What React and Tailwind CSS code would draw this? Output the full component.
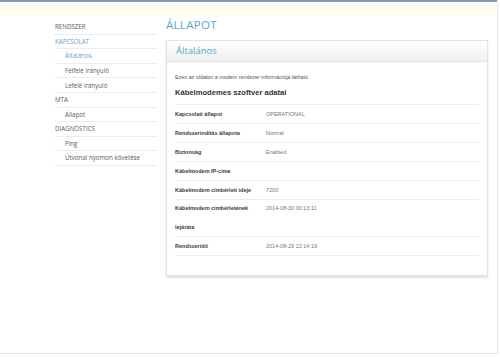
import React from "react";

const nav = [
  { t: "RENDSZER", lvl: 0 },
  { t: "KAPCSOLAT", lvl: 0, active: true },
  { t: "Általános", lvl: 1, active: true },
  { t: "Felfelé irányuló", lvl: 1 },
  { t: "Lefelé irányuló", lvl: 1 },
  { t: "MTA", lvl: 0 },
  { t: "Állapot", lvl: 1 },
  { t: "DIAGNOSTICS", lvl: 0 },
  { t: "Ping", lvl: 1 },
  { t: "Útvonal nyomon követése", lvl: 1 },
];

const rows = [
  ["Kapcsolati állapot", "OPERATIONAL"],
  ["Rendszerindítás állapota", "Normal"],
  ["Biztonság", "Enabled"],
  ["Kábelmodem IP-címe", ""],
  ["Kábelmodem címbérleti ideje", "7200"],
  ["Kábelmodem címbérletének lejárata", "2014-08-30 00:13:11", true],
  ["Rendszeridő", "2014-08-29 22:14:19"],
];

export default function App() {
  return (
    <div className="w-[500px] h-[357px] bg-white overflow-hidden">
      <div className="w-[498px] h-[354px] border-r border-b border-[#e8e8e8]">
        <div className="h-[2px] bg-[#7e9cb7]" />
        <div className="h-[12px] mt-[1px] bg-[#fffbf1]" />
        <div className="flex pl-[55px]">
          <div className="w-[102px] pt-[5px]" style={{ fontFamily: '"Open Sans", sans-serif' }}>
            {nav.map((n, i) => (
              <div
                key={i}
                className={
                  "h-[14.6px] flex items-center border-b border-[#ececec] text-[6.2px] " +
                  (n.lvl ? "pl-[10px] " : "") +
                  (n.active ? "text-[#5fa3cc]" : "text-[#5a5a5a]")
                }
              >
                {n.t}
              </div>
            ))}
          </div>
          <div className="ml-[9px] w-[322px]">
            <div
              className="h-[25px] pt-[3px] text-[11.5px] leading-[14px] text-[#5fa3cc] tracking-[0.3px]"
              style={{ fontFamily: '"Open Sans", sans-serif' }}
            >
              ÁLLAPOT
            </div>
            <div className="border border-[#e2e2e2] shadow-[0_2px_2px_rgba(0,0,0,0.12)] bg-white">
              <div
                className="h-[21px] flex items-center pl-[9px] border-b border-[#e4e4e4] bg-gradient-to-b from-white to-[#efefef] text-[9.5px] text-[#5fa3cc]"
                style={{ fontFamily: '"Open Sans", sans-serif' }}
              >
                Általános
              </div>
              <div className="px-[8px] pb-[19px]" style={{ fontFamily: '"Liberation Sans", Arial, sans-serif' }}>
                <div className="pt-[12px] text-[5.4px] leading-[7px] text-[#555]">
                  Ezen az oldalon a modem rendszer információja látható
                </div>
                <div className="h-[23px] flex items-center text-[7.6px] font-bold text-[#333]">
                  Kábelmodemes szoftver adatai
                </div>
                <div className="border-t border-[#ececec]">
                  {rows.map(([l, v, tall], i) => (
                    <div
                      key={i}
                      className={
                        "flex border-b border-[#ececec] text-[5.5px] " +
                        (tall ? "h-[37px] pt-[4px]" : "h-[19px] items-center")
                      }
                    >
                      <div className="w-[91px] font-bold text-[#3a3a3a]">
                        {tall ? (
                          <>
                            <div className="leading-[8px] h-[19px]">Kábelmodem címbérletének</div>
                            <div className="leading-[8px]">lejárata</div>
                          </>
                        ) : (
                          l
                        )}
                      </div>
                      <div className={"text-[#777] " + (tall ? "leading-[8px]" : "")}>{v}</div>
                    </div>
                  ))}
                </div>
              </div>
            </div>
          </div>
        </div>
      </div>
    </div>
  );
}
